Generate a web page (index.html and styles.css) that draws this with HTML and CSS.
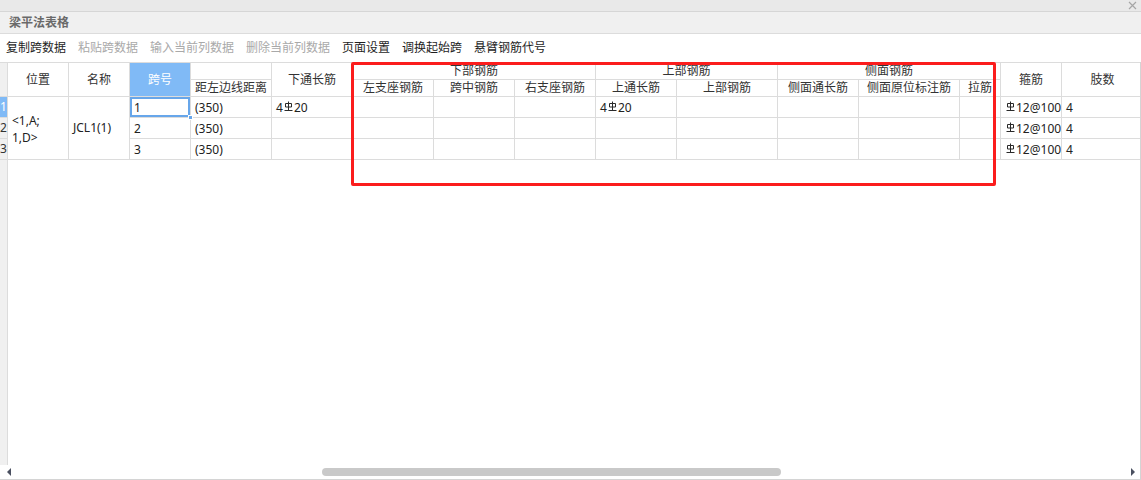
FILE: index.html
```html
<!DOCTYPE html>
<html lang="zh-CN">
<head>
<meta charset="utf-8">
<title>梁平法表格</title>
<link rel="stylesheet" href="styles.css">
</head>
<body>
<div class="window">
  <div class="topbar">
    <svg class="close" width="9" height="9" viewBox="0 0 9 9"><path d="M1 1L8 8M8 1L1 8" stroke="#a6a6a6" stroke-width="1.2" fill="none"/></svg>
  </div>
  <div class="titlebar">梁平法表格</div>
  <div class="toolbar">
    <span class="tb">复制跨数据</span>
    <span class="tb dis">粘贴跨数据</span>
    <span class="tb dis">输入当前列数据</span>
    <span class="tb dis">删除当前列数据</span>
    <span class="tb">页面设置</span>
    <span class="tb">调换起始跨</span>
    <span class="tb">悬臂钢筋代号</span>
  </div>
  <div class="table-area">
    <div class="grid">
      <!-- header row 1 -->
      <div class="cell gut r2"></div>
      <div class="cell h r2">位置</div>
      <div class="cell h r2">名称</div>
      <div class="cell h r2 hsel">跨号</div>
      <div class="cell h"></div>
      <div class="cell h r2">下通长筋</div>
      <div class="cell h c3">下部钢筋</div>
      <div class="cell h c2">上部钢筋</div>
      <div class="cell h c3">侧面钢筋</div>
      <div class="cell h r2">箍筋</div>
      <div class="cell h r2">肢数</div>
      <!-- header row 2 -->
      <div class="cell h">距左边线距离</div>
      <div class="cell h">左支座钢筋</div>
      <div class="cell h">跨中钢筋</div>
      <div class="cell h">右支座钢筋</div>
      <div class="cell h">上通长筋</div>
      <div class="cell h">上部钢筋</div>
      <div class="cell h">侧面通长筋</div>
      <div class="cell h">侧面原位标注筋</div>
      <div class="cell h">拉筋</div>
      <!-- data row 1 -->
      <div class="cell gut gsel">1</div>
      <div class="cell r3 pos"><span>&lt;1,A;<br>1,D&gt;</span></div>
      <div class="cell r3">JCL1(1)</div>
      <div class="cell d sel">1<span class="handle"></span></div>
      <div class="cell d">(350)</div>
      <div class="cell d">4<svg class="rb" width="9" height="11" viewBox="0 0 9 11"><path d="M1.5 2.5H7.5V6H1.5Z M4.5 0.5V9.5 M0.5 9.5H8.5" stroke="#2a2a2a" stroke-width="1" fill="none"/></svg>20</div>
      <div class="cell d"></div>
      <div class="cell d"></div>
      <div class="cell d"></div>
      <div class="cell d">4<svg class="rb" width="9" height="11" viewBox="0 0 9 11"><path d="M1.5 2.5H7.5V6H1.5Z M4.5 0.5V9.5 M0.5 9.5H8.5" stroke="#2a2a2a" stroke-width="1" fill="none"/></svg>20</div>
      <div class="cell d"></div>
      <div class="cell d"></div>
      <div class="cell d"></div>
      <div class="cell d"></div>
      <div class="cell d gj"><svg class="rb" width="9" height="11" viewBox="0 0 9 11"><path d="M1.5 2.5H7.5V6H1.5Z M4.5 0.5V9.5 M0.5 9.5H8.5" stroke="#2a2a2a" stroke-width="1" fill="none"/></svg>12@100</div>
      <div class="cell d">4</div>
      <!-- data row 2 -->
      <div class="cell gut">2</div>
      <div class="cell d">2</div>
      <div class="cell d">(350)</div>
      <div class="cell d"></div>
      <div class="cell d"></div>
      <div class="cell d"></div>
      <div class="cell d"></div>
      <div class="cell d"></div>
      <div class="cell d"></div>
      <div class="cell d"></div>
      <div class="cell d"></div>
      <div class="cell d"></div>
      <div class="cell d gj"><svg class="rb" width="9" height="11" viewBox="0 0 9 11"><path d="M1.5 2.5H7.5V6H1.5Z M4.5 0.5V9.5 M0.5 9.5H8.5" stroke="#2a2a2a" stroke-width="1" fill="none"/></svg>12@100</div>
      <div class="cell d">4</div>
      <!-- data row 3 -->
      <div class="cell gut">3</div>
      <div class="cell d">3</div>
      <div class="cell d">(350)</div>
      <div class="cell d"></div>
      <div class="cell d"></div>
      <div class="cell d"></div>
      <div class="cell d"></div>
      <div class="cell d"></div>
      <div class="cell d"></div>
      <div class="cell d"></div>
      <div class="cell d"></div>
      <div class="cell d"></div>
      <div class="cell d gj"><svg class="rb" width="9" height="11" viewBox="0 0 9 11"><path d="M1.5 2.5H7.5V6H1.5Z M4.5 0.5V9.5 M0.5 9.5H8.5" stroke="#2a2a2a" stroke-width="1" fill="none"/></svg>12@100</div>
      <div class="cell d">4</div>
    </div>
    <div class="filler"><div class="gfill"></div></div>
    <div class="annot"></div>
  </div>
  <div class="hscroll">
    <span class="arr arr-l"></span>
    <div class="track"><div class="thumb"></div></div>
    <span class="arr arr-r"></span>
  </div>
</div>
</body>
</html>
```

FILE: styles.css
```css
* { box-sizing: border-box; }

body {
  margin: 0;
  font-family: "Noto Sans", "Noto Sans CJK SC", sans-serif;
  font-size: 12px;
  color: #222;
  background: #fff;
}

.window {
  width: 1141px;
  height: 480px;
  display: flex;
  flex-direction: column;
  overflow: hidden;
}

.topbar {
  height: 12px;
  flex-shrink: 0;
  background: #e9e9e9;
  border-bottom: 1px solid #d6d6d6;
  display: flex;
  justify-content: flex-end;
  align-items: center;
  padding-right: 4px;
}

.close { display: block; }

.titlebar {
  height: 22px;
  flex-shrink: 0;
  background: #f0f0f0;
  border-bottom: 1px solid #dcdcdc;
  padding-left: 9px;
  font-weight: bold;
  color: #6a6a6a;
  line-height: 21px;
}

.toolbar {
  height: 28px;
  flex-shrink: 0;
  display: flex;
  align-items: center;
  gap: 12px;
  padding-left: 6px;
  background: #fff;
}

.tb { color: #1e1e1e; line-height: 16px; }
.tb.dis { color: #a9a9a9; }

.table-area {
  flex: 1;
  position: relative;
  overflow: hidden;
  display: flex;
  flex-direction: column;
  border-right: 1px solid #d4d4d4;
}

.grid {
  display: grid;
  grid-template-columns: 8px 61px 61px 61px 81px 81px 81px 81px 81px 81px 101px 81px 101px 41px 61px 82px;
  grid-template-rows: 17px 17px 21px 21px 21px;
  border-top: 1px solid #dcdcdc;
  width: max-content;
  flex-shrink: 0;
}

.cell {
  border-right: 1px solid #dcdcdc;
  border-bottom: 1px solid #dcdcdc;
  overflow: hidden;
  white-space: nowrap;
  display: flex;
  align-items: center;
  padding-left: 4px;
  line-height: 16px;
  position: relative;
}

.r2 { grid-row: span 2; }
.r3 { grid-row: span 3; }
.c2 { grid-column: span 2; }
.c3 { grid-column: span 3; }

.h {
  justify-content: center;
  padding-left: 0;
  color: #333;
}

.hsel {
  background: #80baf6;
  color: #fff;
}

.gut {
  background: #f0f0f0;
  padding-left: 0;
  overflow: hidden;
  color: #333;
}

.gsel {
  background: #80baf6;
  color: #fff;
}

.d { padding-top: 2px; }

.pos span { line-height: 17px; padding-top: 2px; }

.sel {
  overflow: visible;
  box-shadow: inset 0 0 0 2px #67a6ea;
  z-index: 1;
}

.handle {
  position: absolute;
  right: -3px;
  bottom: -3px;
  width: 5px;
  height: 5px;
  background: #67a6ea;
  border: 1px solid #fff;
}

.rb {
  display: inline-block;
  margin: 0 1px 0 1px;
  position: relative;
  top: -2px;
  flex-shrink: 0;
}

.gj { padding-left: 4px; }

.filler {
  flex: 1;
  display: flex;
}

.gfill {
  width: 8px;
  background: #f0f0f0;
  border-right: 1px solid #dcdcdc;
}

.annot {
  position: absolute;
  top: 0;
  left: 351px;
  width: 645px;
  height: 124px;
  border: 3px solid #fb1d1d;
  border-radius: 2px;
  pointer-events: none;
}

.hscroll {
  height: 15px;
  flex-shrink: 0;
  border-bottom: 1px solid #d4d4d4;
  border-right: 1px solid #d4d4d4;
  display: flex;
  align-items: center;
  padding-left: 7px;
  padding-right: 5px;
}

.arr {
  width: 0;
  height: 0;
  border-top: 4px solid transparent;
  border-bottom: 4px solid transparent;
  flex-shrink: 0;
}

.arr-l { border-right: 4px solid #4a5060; }
.arr-r { border-left: 4px solid #4a5060; }

.track {
  flex: 1;
  height: 8px;
  display: flex;
}

.thumb {
  margin-left: 311px;
  width: 459px;
  height: 8px;
  border-radius: 4px;
  background: #c9c9c9;
}
```
